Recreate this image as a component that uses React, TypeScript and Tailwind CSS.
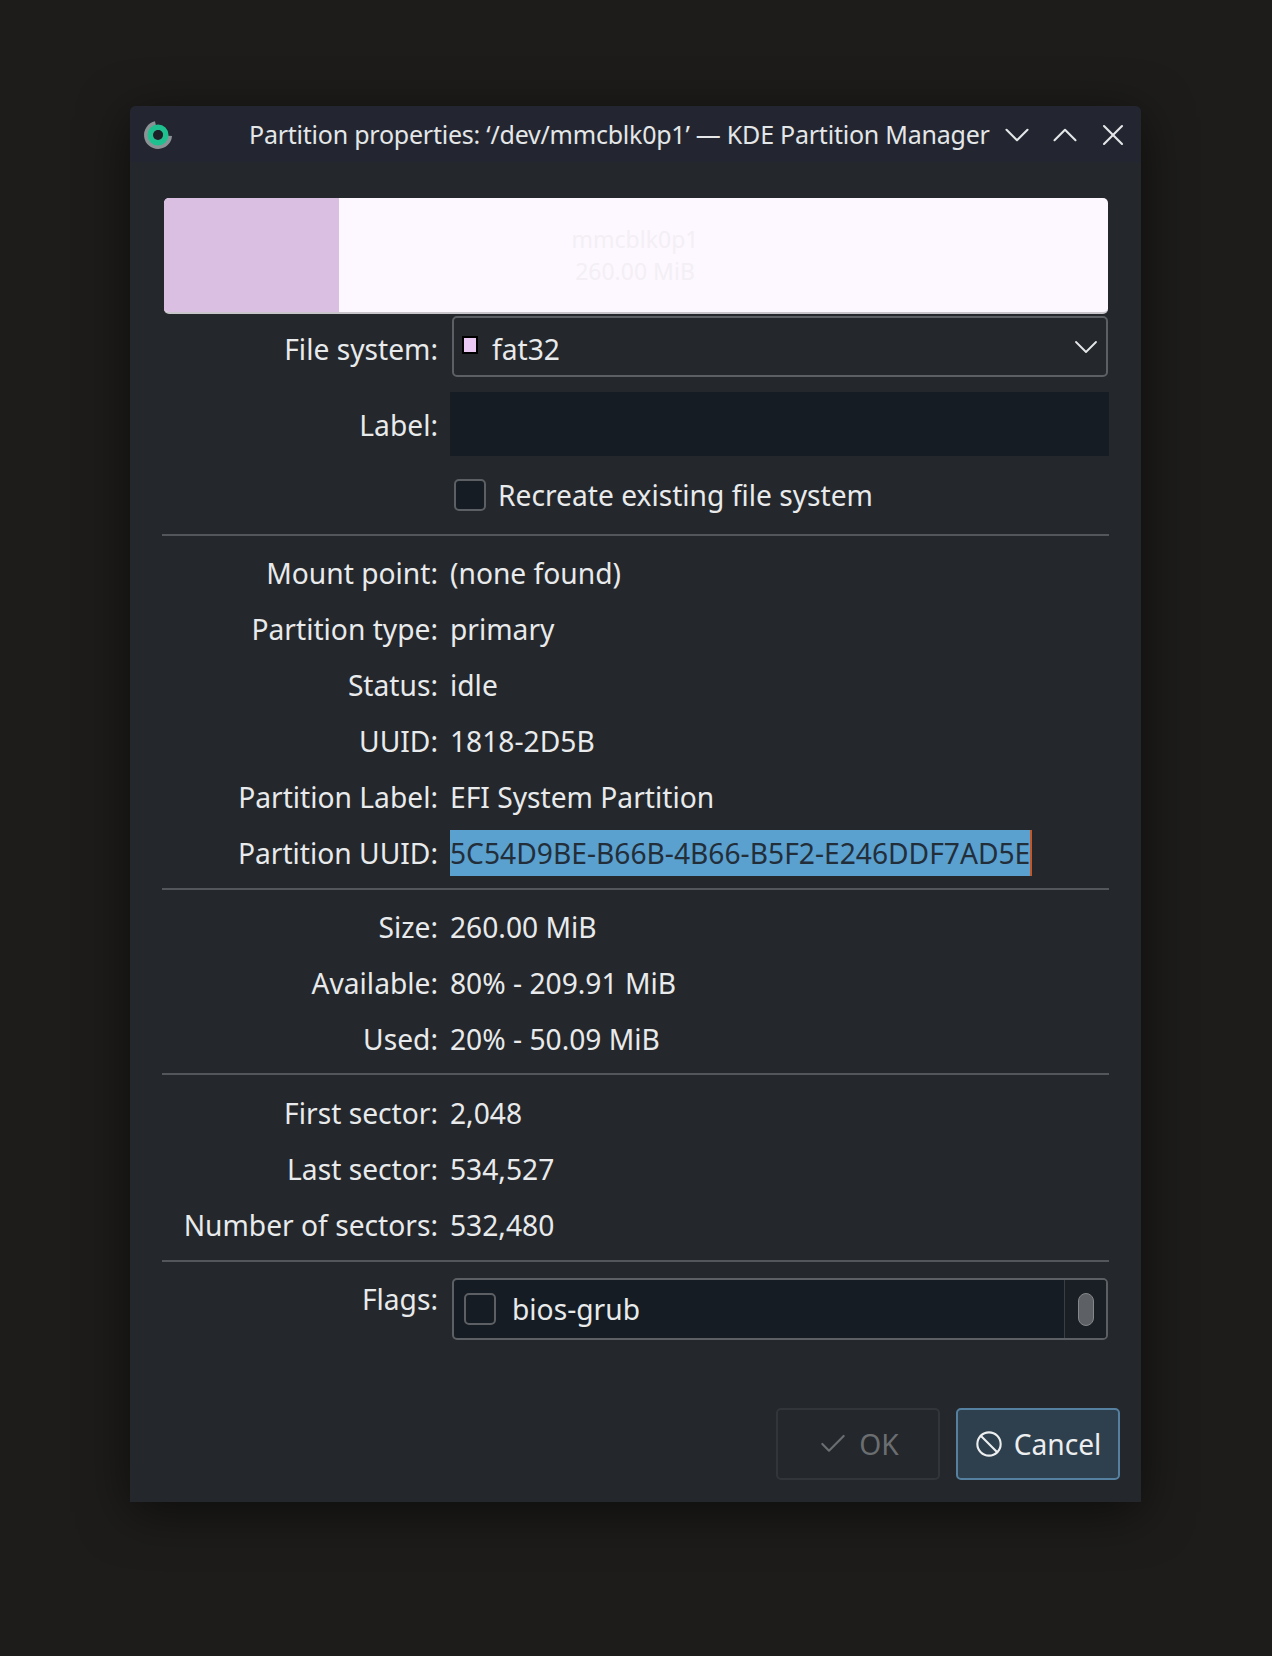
import React from "react";
import { Ban, Check, ChevronDown, ChevronUp, X } from "lucide-react";

const font = { fontFamily: '"Noto Sans", sans-serif' };

// one label + value line of the properties form
const InfoRow: React.FC<{ label: string; children: React.ReactNode }> = ({ label, children }) => (
  <div className="flex h-[56px] items-center">
    <div className="w-[276px] shrink-0 text-right text-[#e8eaeb]">{label}</div>
    <div className="ml-[12px] flex-1 text-[#e8eaeb]">{children}</div>
  </div>
);

const Divider = () => <div className="h-[2px] bg-[#53565a]" />;

const AppIcon = () => (
  <svg className="shrink-0" width="32" height="32" viewBox="0 0 32 32">
    <path d="M13 2.3 A14 14 0 1 0 30 17 L16 16 Z" fill="#8b9296" />
    <circle cx="16" cy="16" r="7.75" fill="none" stroke="#1fc08f" strokeWidth="5.5" />
    <circle cx="16" cy="16" r="5" fill="#1c2128" />
  </svg>
);

export default function App() {
  return (
    <div className="h-[1656px] w-[1272px] overflow-hidden bg-[#1d1c1a] pl-[130px] pt-[106px] text-[28.2px] leading-none" style={font}>
      <div className="h-[1396px] w-[1011px] rounded-t-[6px] bg-[#24272b] shadow-[0_10px_50px_rgba(0,0,0,0.55)]">
        {/* title bar */}
        <div className="flex h-[56px] items-center rounded-t-[6px] bg-[#232630] pl-[12px] pr-[7px] pt-[1px]">
          <AppIcon />
          <div className="ml-[75px] whitespace-nowrap text-[25px] tracking-[-0.23px] text-[#e4e6e8]">Partition properties: ‘/dev/mmcblk0p1’ — KDE Partition Manager</div>
          <div className="ml-auto flex items-center gap-[6px] text-[#e4e6e8]">
            <ChevronDown size={42} strokeWidth={1.2} />
            <ChevronUp size={42} strokeWidth={1.2} />
            <div className="flex w-[42px] justify-center">
              <X size={36} strokeWidth={1.4} />
            </div>
          </div>
        </div>

        <div className="px-[32px] pt-[36px]">
          {/* partition usage bar */}
          <div className="relative ml-[2px] flex h-[116px] w-[944px] items-center justify-center overflow-hidden rounded-[5px] border-b-2 border-[#c9c6cb] bg-[#fdf8ff]">
            <div className="absolute bottom-0 left-0 top-0 w-[175px] bg-[#dbbfe3]" />
            <div className="relative text-center text-[23px] leading-[32px] text-[#f3eff5]">
              <div className="-ml-[2px]">mmcblk0p1</div>
              <div className="-ml-[2px]">260.00 MiB</div>
            </div>
          </div>

          <div className="mt-[2px] flex h-[61px] items-center">
            <div className="w-[276px] shrink-0 pt-[5px] text-right text-[#e8eaeb]">File system:</div>
            <div className="ml-[14px] flex h-[61px] w-[656px] items-center rounded-[5px] border-2 border-[#5c5f63] pl-[8px]">
              <span className="mb-[3px] h-[18px] w-[16px] border-2 border-black bg-[#eac9f4]" />
              <span className="ml-[14px] pt-[5px] text-[#e8eaeb]">fat32</span>
              <ChevronDown className="ml-auto text-[#e4e6e8]" size={40} strokeWidth={1.1} />
            </div>
          </div>

          <div className="mt-[15px] flex h-[64px] items-center">
            <div className="w-[276px] shrink-0 pt-[3px] text-right text-[#e8eaeb]">Label:</div>
            <div className="ml-[12px] h-[64px] w-[661px] bg-[#161c23]" />
          </div>

          <div className="mt-[23px] flex h-[32px] items-center pl-[292px]">
            <span className="h-[32px] w-[32px] rounded-[5px] border-2 border-[#5c5f63] bg-[#161c23]" />
            <span className="ml-[12px] text-[#e8eaeb]">Recreate existing file system</span>
          </div>

          <div className="mt-[23px]"><Divider /></div>

          <div className="pt-[9px]">
            <InfoRow label="Mount point:">(none found)</InfoRow>
            <InfoRow label="Partition type:">primary</InfoRow>
            <InfoRow label="Status:">idle</InfoRow>
            <InfoRow label="UUID:">1818-2D5B</InfoRow>
            <InfoRow label="Partition Label:">EFI System Partition</InfoRow>
            <InfoRow label="Partition UUID:">
              <span className="inline-flex h-[46px] w-[582px] items-center whitespace-nowrap border-r-2 border-[#c0582a] bg-[#5aa1cf] text-[#232e3b]">5C54D9BE-B66B-4B66-B5F2-E246DDF7AD5E</span>
            </InfoRow>
          </div>
          <div className="mt-[7px]"><Divider /></div>

          <div className="pt-[9px]">
            <InfoRow label="Size:">260.00 MiB</InfoRow>
            <InfoRow label="Available:">80% - 209.91 MiB</InfoRow>
            <InfoRow label="Used:">20% - 50.09 MiB</InfoRow>
          </div>
          <div className="mt-[6px]"><Divider /></div>

          <div className="pt-[10px]">
            <InfoRow label="First sector:">2,048</InfoRow>
            <InfoRow label="Last sector:">534,527</InfoRow>
            <InfoRow label="Number of sectors:">532,480</InfoRow>
          </div>
          <div className="mt-[7px]"><Divider /></div>

          <div className="mt-[16px] flex items-start">
            <div className="mt-[7px] w-[276px] shrink-0 text-right text-[#e8eaeb]">Flags:</div>
            <div className="ml-[14px] flex h-[62px] w-[656px] overflow-hidden rounded-[5px] border-2 border-[#5c5f63] bg-[#161c23]">
              <div className="flex flex-1 items-center pl-[10px]">
                <span className="h-[32px] w-[32px] rounded-[5px] border-2 border-[#5c5f63]" />
                <span className="ml-[16px] text-[#e8eaeb]">bios-grub</span>
              </div>
              <div className="flex w-[42px] items-center justify-center border-l border-[#3a3d41] bg-[#1a1f25]">
                <span className="h-[33px] w-[16px] rounded-full border border-[#85888b] bg-[#5d6064]" />
              </div>
            </div>
          </div>

          {/* dialog buttons */}
          <div className="-mr-[11px] mt-[68px] flex justify-end gap-[16px]">
            <button className="flex h-[72px] w-[164px] items-center justify-center gap-[10px] rounded-[5px] border-2 border-[#323539] text-[#6b6e71]">
              <Check size={32} strokeWidth={1.6} />
              OK
            </button>
            <button className="flex h-[72px] w-[164px] items-center justify-center gap-[11px] rounded-[5px] border-2 border-[#55809f] bg-[#2e404d] text-[#eceeef]">
              <Ban size={28} strokeWidth={1.8} />
              Cancel
            </button>
          </div>
        </div>
      </div>
    </div>
  );
}
